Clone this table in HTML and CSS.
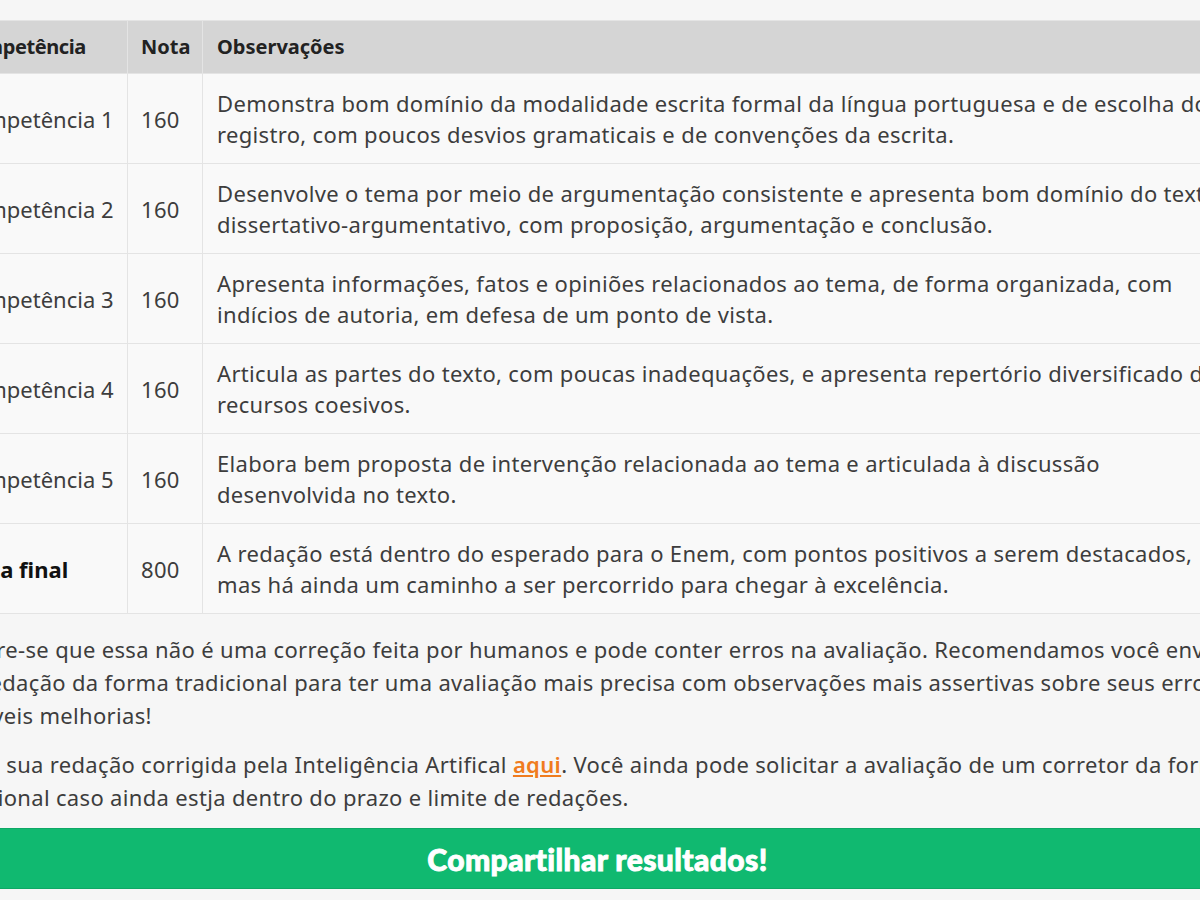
FILE: index.html
```html
<!DOCTYPE html>
<html lang="pt-BR">
<head>
<meta charset="utf-8">
<title>Resultado da correção</title>
<link rel="stylesheet" href="styles.css">
</head>
<body>
<main class="page">
  <table class="grades">
    <thead>
      <tr>
        <th class="col-comp">Competência</th>
        <th class="col-nota">Nota</th>
        <th class="col-obs">Observações</th>
      </tr>
    </thead>
    <tbody>
      <tr>
        <td>Competência 1</td>
        <td>160</td>
        <td>Demonstra bom domínio da modalidade escrita formal da língua portuguesa e de escolha do registro, com poucos desvios gramaticais e de convenções da escrita.</td>
      </tr>
      <tr>
        <td>Competência 2</td>
        <td>160</td>
        <td>Desenvolve o tema por meio de argumentação consistente e apresenta bom domínio do texto dissertativo-argumentativo, com proposição, argumentação e conclusão.</td>
      </tr>
      <tr>
        <td>Competência 3</td>
        <td>160</td>
        <td>Apresenta informações, fatos e opiniões relacionados ao tema, de forma organizada, com indícios de autoria, em defesa de um ponto de vista.</td>
      </tr>
      <tr>
        <td>Competência 4</td>
        <td>160</td>
        <td>Articula as partes do texto, com poucas inadequações, e apresenta repertório diversificado de recursos coesivos.</td>
      </tr>
      <tr>
        <td>Competência 5</td>
        <td>160</td>
        <td>Elabora bem proposta de intervenção relacionada ao tema e articulada à discussão desenvolvida no texto.</td>
      </tr>
      <tr>
        <td class="total">Nota final</td>
        <td>800</td>
        <td>A redação está dentro do esperado para o Enem, com pontos positivos a serem destacados, mas há ainda um caminho a ser percorrido para chegar à excelência.</td>
      </tr>
    </tbody>
  </table>

  <p class="note">Lembre-se que essa não é uma correção feita por humanos e pode conter erros na avaliação. Recomendamos você enviar sua redação da forma tradicional para ter uma avaliação mais precisa com observações mais assertivas sobre seus erros e possíveis melhorias!</p>
  <p class="note">Veja a sua redação corrigida pela Inteligência Artifical <a href="#" class="link">aqui</a>. Você ainda pode solicitar a avaliação de um corretor da forma tradicional caso ainda estja dentro do prazo e limite de redações.</p>

  <button class="share" type="button">Compartilhar resultados!</button>
</main>
</body>
</html>
```
FILE: styles.css
```css
html, body {
  margin: 0;
  padding: 0;
}

body {
  background: #f6f6f6;
  color: #3d3d3d;
  font-family: "Noto Sans", "Open Sans", sans-serif;
  font-size: 22px;
  letter-spacing: 0.33px;
  overflow: hidden;
}

.page {
  width: 1305px;
  margin-left: -55px;
  padding-top: 20px;
}

.grades {
  width: 100%;
  border-collapse: collapse;
  table-layout: fixed;
  background: #f9f9f9;
}

.grades th,
.grades td {
  box-sizing: border-box;
  border: 1px solid #e4e4e4;
  padding: 14px 13px 13px;
  text-align: left;
  vertical-align: middle;
  line-height: 31px;
}

.grades td:first-child {
  white-space: nowrap;
  letter-spacing: 0;
}

.grades td:last-child,
.grades th:last-child {
  padding-left: 14px;
}

.grades th {
  background: #d5d5d5;
  color: #222;
  font-weight: 700;
  font-size: 20px;
  letter-spacing: 0;
  line-height: 28px;
  padding-top: 12px;
  padding-bottom: 12px;
}

.grades th.col-comp {
  letter-spacing: -0.4px;
}

.col-comp { width: 182px; }
.col-nota { width: 75px; }

.grades .total {
  font-weight: 700;
  color: #111;
}

.note {
  margin: 19px 0 0 -8px;
  line-height: 33px;
}

.note + .note {
  margin-top: 16px;
}

.link {
  color: #f07c1e;
  font-weight: 600;
  text-decoration: underline;
}

.share {
  display: block;
  width: 100%;
  margin-top: 14px;
  height: 61px;
  border: 1px solid #0ea866;
  background: #10b970;
  color: #fff;
  font-family: "Lato", "Roboto", sans-serif;
  font-weight: 900;
  font-size: 30px;
  letter-spacing: 0.4px;
  -webkit-text-stroke: 0.9px #fff;
  cursor: pointer;
}
```
